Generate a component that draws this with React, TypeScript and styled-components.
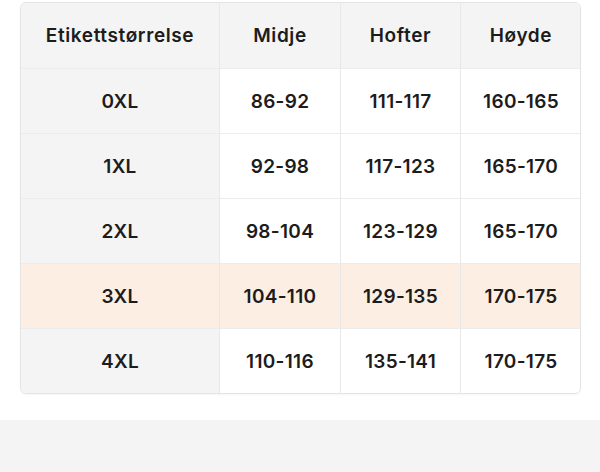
import styled, { createGlobalStyle } from "styled-components";

const GlobalStyle = createGlobalStyle`
  body {
    margin: 0;
    background: #ffffff;
    font-family: Inter, "Noto Sans", sans-serif;
    color: #1c1c1c;
  }
`;

const Page = styled.div`
  width: 600px;
  height: 472px;
  display: flex;
  flex-direction: column;
`;

const TableWrap = styled.div`
  margin: 2px 19px 0 20px;
  border: 1px solid #e4e4e4;
  border-radius: 6px;
  overflow: hidden;
  display: grid;
  grid-template-columns: 199px 121px 120px 120px;
  box-shadow: 0 1px 2px rgba(0, 0, 0, 0.04);
`;

const Cell = styled.div<{ $head?: boolean; $first?: boolean; $hl?: boolean; $last?: boolean; $lastCol?: boolean }>`
  height: ${(p) => (p.$head ? "65px" : "64px")};
  display: flex;
  align-items: center;
  justify-content: center;
  font-size: 19px;
  font-weight: 600;
  letter-spacing: ${(p) => (p.$head ? "0.6px" : "0.3px")};
  border-right: ${(p) => (p.$lastCol ? "none" : "1px solid #e8e8e8")};
  border-bottom: ${(p) => (p.$last ? "none" : "1px solid #ececec")};
  background: ${(p) =>
    p.$hl ? "#fdeee3" : p.$head || p.$first ? "#f4f4f4" : "#ffffff"};
`;

const Footer = styled.div`
  margin-top: auto;
  height: 52px;
  background: #f4f4f4;
`;

const headers = ["Etikettstørrelse", "Midje", "Hofter", "Høyde"];

const rows = [
  ["0XL", "86-92", "111-117", "160-165"],
  ["1XL", "92-98", "117-123", "165-170"],
  ["2XL", "98-104", "123-129", "165-170"],
  ["3XL", "104-110", "129-135", "170-175"],
  ["4XL", "110-116", "135-141", "170-175"],
];

const App = () => {
  return (
    <Page>
      <GlobalStyle />
      <TableWrap>
        {headers.map((h, i) => (
          <Cell key={h} $head $lastCol={i === headers.length - 1}>
            {h}
          </Cell>
        ))}
        {rows.map((row, r) =>
          row.map((v, c) => (
            <Cell
              key={`${r}-${c}`}
              $first={c === 0}
              $hl={r === 3}
              $last={r === rows.length - 1}
              $lastCol={c === row.length - 1}
            >
              {v}
            </Cell>
          ))
        )}
      </TableWrap>
      <Footer />
    </Page>
  );
};

export default App;
